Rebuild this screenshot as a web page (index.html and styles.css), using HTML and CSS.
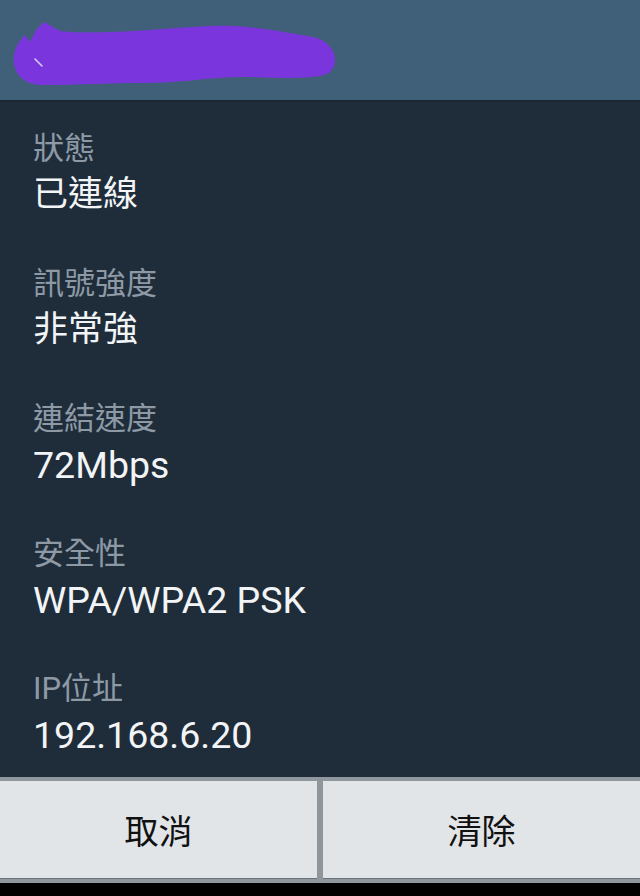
FILE: index.html
```html
<!DOCTYPE html>
<html lang="zh-Hant">
<head>
<meta charset="utf-8">
<link rel="stylesheet" href="styles.css">
</head>
<body>
<div class="screen">
  <header class="title-bar">
    <svg class="blob" width="345" height="100" viewBox="0 0 345 100">
      <path d="M44,22 L60,31 C70,33 110,33 150,30 C190,27 215,25 235,26 C265,28 292,33 313,37 C338,42 342,70 324,75 C305,80 270,77 240,77 C200,78 185,83 140,83 C110,83 80,85 40,85 C25,84 16,76 14,64 C12,52 18,42 25,35 L30,42 L36,30 Z" fill="#7A36DC"/>
      <path d="M35,59 L42,66" stroke="#d9cff5" stroke-width="1.5" stroke-linecap="round"/>
    </svg>
  </header>
  <main class="details">
    <div class="item"><div class="label">狀態</div><div class="value">已連線</div></div>
    <div class="item"><div class="label">訊號強度</div><div class="value">非常強</div></div>
    <div class="item"><div class="label">連結速度</div><div class="value latin">72Mbps</div></div>
    <div class="item"><div class="label">安全性</div><div class="value latin">WPA/WPA2 PSK</div></div>
    <div class="item"><div class="label">IP位址</div><div class="value latin">192.168.6.20</div></div>
  </main>
  <footer class="buttons">
    <div class="btn">取消</div>
    <div class="btn">清除</div>
  </footer>
  <div class="navbar"></div>
</div>
</body>
</html>
```
FILE: styles.css
```css
* { box-sizing: border-box; }
html, body { margin: 0; padding: 0; background: #000; }
.screen {
  width: 640px;
  height: 896px;
  display: flex;
  flex-direction: column;
  font-family: Roboto, "Noto Sans CJK TC", sans-serif;
  background: #1F2D3B;
}
.title-bar {
  height: 102px;
  background: #40607A;
  border-bottom: 2px solid #1A2733;
  flex: none;
}
.blob { display: block; }
.details {
  flex: 1;
  padding: 27px 33px 0;
  display: flex;
  flex-direction: column;
  gap: 43px;
}
.label {
  font-size: 31px;
  line-height: 40px;
  color: #8D9AA6;
}
.value {
  font-size: 35px;
  line-height: 52px;
  color: #F2F4F6;
}
.value.latin {
  font-size: 37.5px;
}
.buttons {
  flex: none;
  height: 106px;
  background: #8F979D;
  padding: 4px 0 5px;
  display: flex;
  gap: 6px;
}
.btn {
  flex: 1;
  background: #E1E5E8;
  display: flex;
  align-items: center;
  justify-content: center;
  font-size: 34px;
  color: #111;
  box-shadow: 0 1px 0 #6d7479;
}
.navbar {
  flex: none;
  height: 13px;
  background: #000;
}
```
